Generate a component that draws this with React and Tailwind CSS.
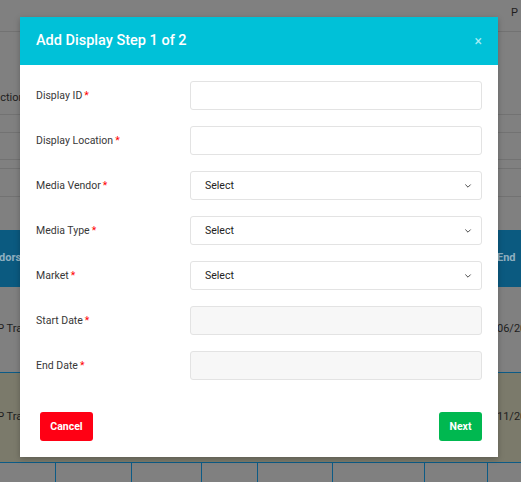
import React from 'react';

const FIELDS = [
  { id: 'displayId', label: 'Display ID', kind: 'text' },
  { id: 'location', label: 'Display Location', kind: 'text' },
  { id: 'vendor', label: 'Media Vendor', kind: 'select' },
  { id: 'mediaType', label: 'Media Type', kind: 'select' },
  { id: 'market', label: 'Market', kind: 'select' },
  { id: 'startDate', label: 'Start Date', kind: 'date' },
  { id: 'endDate', label: 'End Date', kind: 'date' },
];

// column edges of the table sitting under the dialog
const COLS = ['w-[56px]', 'w-[76px]', 'w-[70px]', 'w-[56px]', 'w-[75px]', 'w-[92px]', 'w-[63px]', 'flex-1'];

function Chevron() {
  return (
    <svg width="8" height="8" viewBox="0 0 10 10" fill="none" className="shrink-0">
      <path d="M2 3.5 L5 6.5 L8 3.5" stroke="#444" strokeWidth="1.2" strokeLinecap="round" strokeLinejoin="round" />
    </svg>
  );
}

function Field({ field }) {
  const base = 'w-[292px] h-[29px] rounded-[3px] border border-[#e3e3e3] flex items-center';
  return (
    <div className="flex items-center h-[29px]">
      <label className="w-[154px] text-[10.5px] text-[#383838] flex items-center">
        {field.label}
        <span className="text-[#ff0000] ml-[2px]">*</span>
      </label>
      {field.kind === 'select' ? (
        <div className={`${base} bg-white pl-[14px] pr-[9px] justify-between`}>
          <span className="text-[10.5px] text-[#222]">Select</span>
          <Chevron />
        </div>
      ) : field.kind === 'date' ? (
        <div className={`${base} bg-[#f7f7f7]`} />
      ) : (
        <div className={`${base} bg-white`} />
      )}
    </div>
  );
}

export default function App() {
  return (
    <div className="relative w-[521px] h-[482px] overflow-hidden bg-[#808080] text-[#1e1e1e]" style={{ fontFamily: 'Roboto, "Noto Sans", sans-serif' }}>

      {/* ── Dimmed page behind the dialog ── */}
      <div className="flex flex-col text-[11px]">
        <div className="h-[32px] border-b border-[#727272] flex justify-end items-start pt-[5px] pr-[1px]">
          <span className="w-[9px] overflow-hidden">P</span>
        </div>
        <div className="h-[83px] border-b border-[#727272] flex items-end pb-[8px] overflow-hidden">
          <span className="ml-[-28px] whitespace-nowrap">Instruction</span>
        </div>
        <div className="h-[18px] border-b border-[#727272]" />
        <div className="h-[27px] border-b border-[#727272]" />
        <div className="h-[9px] border-b border-[#727272]" />
        <div className="h-[28px] border-b border-[#727272]" />
        <div className="h-[33px]" />
        <div className="h-[57px] bg-[#0b5a80] flex items-center justify-between font-bold text-[#8fb0c0] overflow-hidden">
          <span className="ml-[-20px] whitespace-nowrap">Vendors</span>
          <span className="w-[24px] whitespace-nowrap">End</span>
        </div>
        <div className="h-[86px] border-b border-[#0c5b86] flex items-center justify-between overflow-hidden">
          <span className="ml-[-18px] whitespace-nowrap">OOP Transit</span>
          <span className="w-[24px] whitespace-nowrap overflow-hidden">06/2021</span>
        </div>
        <div className="h-[90px] bg-[#7b7a6b] border-b border-[#0c5b86] flex items-center justify-between overflow-hidden">
          <span className="ml-[-18px] whitespace-nowrap">OOP Transit</span>
          <span className="w-[24px] whitespace-nowrap overflow-hidden">11/2021</span>
        </div>
        <div className="h-[30px] flex">
          {COLS.map((w, i) => (
            <div key={i} className={`${w} h-full ${i < COLS.length - 1 ? 'border-r border-[#0c5b86]' : ''}`} />
          ))}
        </div>
      </div>

      {/* ── Dialog ── */}
      <div className="absolute left-[20px] top-[17px] w-[478px] h-[440px] bg-white shadow-[0_2px_6px_rgba(0,0,0,0.25)] flex flex-col">
        <div className="h-[48px] bg-[#00c1d8] flex items-center justify-between pl-[16px] pr-[16px]">
          <h2 className="text-[14.5px] font-medium text-white">Add Display Step 1 of 2</h2>
          <span className="text-[14px] leading-none text-[#a6ecf4]">×</span>
        </div>

        <div className="flex flex-col gap-[16px] pt-[16px] pl-[16px]">
          {FIELDS.map(f => <Field key={f.id} field={f} />)}
        </div>

        <div className="flex justify-between pl-[20px] pr-[16px] mt-[32px]">
          <button className="w-[53px] h-[29px] rounded-[3px] bg-[#ff0014] text-white text-[10.5px] font-bold">Cancel</button>
          <button className="w-[43px] h-[29px] rounded-[3px] bg-[#00b850] text-white text-[10.5px] font-bold">Next</button>
        </div>
      </div>
    </div>
  );
}
